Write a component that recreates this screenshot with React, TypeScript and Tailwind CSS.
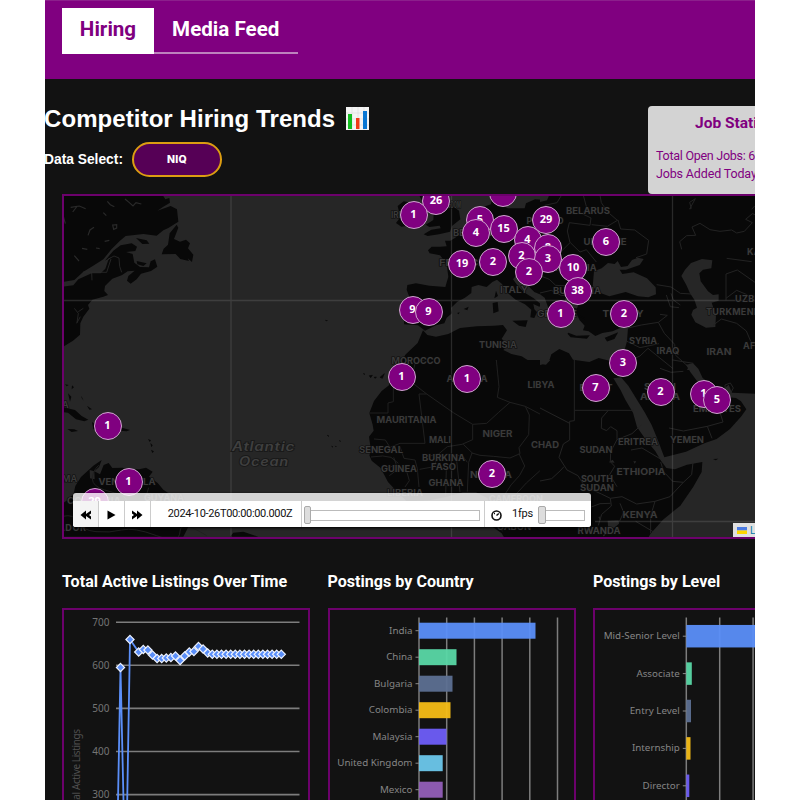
import React from "react";

const LABEL_FONT = "Inter, 'Noto Sans', sans-serif";

type Place = [text: string, x: number, y: number, width: number];

// Country names: centre x, baseline y, drawn width
const places: Place[] = [
  ["BELARUS", 588, 214, 44],
  ["IRELAND", 409, 218, 36],
  ["UNITED KINGDOM", 442, 208, 38],
  ["POLAND", 545, 224, 37],
  ["BELGIUM", 474, 236, 42],
  ["UKRAINE", 605, 245, 43],
  ["ROMANIA", 574, 271, 45],
  ["FRANCE", 462, 266, 46],
  ["ITALY", 514, 293, 28],
  ["BULGARIA", 577, 294, 48],
  ["GREECE", 557, 317, 40],
  ["TURKEY", 623, 317, 41],
  ["TUNISIA", 498, 348, 38],
  ["MOROCCO", 416, 364, 49],
  ["SYRIA", 643, 344, 28],
  ["IRAQ", 668, 354, 23],
  ["IRAN", 719, 355, 25],
  ["ALGERIA", 467, 382, 41],
  ["LIBYA", 541, 388, 27],
  ["EGYPT", 596, 391, 33],
  ["SAUDI", 660, 390, 32],
  ["ARABIA", 660, 400, 40],
  ["EMIRATES", 717, 412, 48],
  ["MAURITANIA", 406.500, 423, 60],
  ["MALI", 440, 443, 22],
  ["NIGER", 497.500, 437, 30],
  ["CHAD", 545, 448, 28],
  ["SUDAN", 596, 453, 33],
  ["ERITREA", 638, 445, 40],
  ["YEMEN", 687, 443, 34],
  ["SENEGAL", 381, 453, 44],
  ["GUINEA", 399, 472, 36],
  ["BURKINA", 443.500, 461, 43],
  ["FASO", 443.500, 470, 25],
  ["GHANA", 446, 486, 35],
  ["NIGERIA", 491, 478, 42],
  ["LIBERIA", 405, 496, 36],
  ["CAMEROON", 516, 502, 54],
  ["GABON", 514, 530, 34],
  ["ETHIOPIA", 641, 475, 49],
  ["SOUTH", 597, 482, 32],
  ["SUDAN", 597, 491, 34],
  ["KENYA", 640, 518, 35],
  ["RWANDA", 599, 534, 43],
  ["VENEZUELA", 127, 485, 57],
  ["GUYANA", 164, 501, 40],
  ["COLOMBIA", 94, 504, 54],
];

// Names that run past an edge of the map: start x
const edgePlaces: [string, number, number][] = [
  ["KAZ", 747, 255],
  ["UZBEK", 735, 302],
  ["TURKMENIS", 706, 315],
  ["AFG", 743, 349],
];

const markers: [string, number, number][] = [
  ["", 503, 192.500],
  ["26", 436, 200.500],
  ["1", 413.500, 215],
  ["5", 480, 220],
  ["4", 476, 233],
  ["15", 503.500, 229],
  ["29", 546, 220],
  ["4", 527.500, 240],
  ["8", 548, 247.500],
  ["2", 521.500, 255.500],
  ["3", 548, 259],
  ["2", 529, 272],
  ["6", 606, 242],
  ["19", 462, 263.500],
  ["2", 493, 261.500],
  ["10", 573, 267.500],
  ["38", 577.500, 291],
  ["1", 560.500, 314],
  ["2", 624, 314],
  ["9", 412.500, 310],
  ["9", 428.500, 311.500],
  ["1", 401.500, 377],
  ["1", 467, 378.500],
  ["3", 623, 363],
  ["7", 595.500, 388],
  ["2", 660.500, 391.500],
  ["1", 703.500, 393.500],
  ["5", 717, 400],
  ["1", 107.500, 426],
  ["1", 128.500, 482],
  ["29", 94.500, 502],
  ["2", 492, 474],
];

const LAND = "#080808";
const SEA = "#262626";

function WorldMap() {
  return (
    <svg className="block h-full w-full" viewBox="64 196 691 341" preserveAspectRatio="none">
      <defs>
        <clipPath id="nw"><rect width="780" height="540" /></clipPath>
        <clipPath id="sw"><rect width="780" height="570" /></clipPath>
      </defs>
      <rect x="63" y="195" width="692" height="344" fill={SEA} />

      {/* North America */}
      <g transform="translate(40 190) scale(.33333)" fill={LAND}>
        <path d="M69 15H368L376 28 388 24 390 38 370 50 352 62 392 48 411 58 415 95 398 106 385 114 370 121 350 137 310 132 257 138 240 152 215 177 190 208 162 226 130 245 103 270 69 276ZM69 290L100 286 115 268 155 250 182 250 196 236 205 210 215 200 195 212 220 182 242 166 275 160 291 170 286 183 258 186 278 192 283 218 300 231 327 232 332 214 345 208 352 230 333 243 303 251 290 268 272 281 261 272 265 258 284 242 263 244 245 256 217 266 195 288 193 303 204 315 190 320 157 329 144 345 148 356 130 380 121 400 120 434 99 452 69 471Z" />
        <path d="M410 104L415 113 402 147 420 155 438 149 450 160 444 175 460 194 456 216 443 205 447 213 421 207 407 192 365 193 371 176 384 164 389 130ZM288 144L320 151 328 161 307 162ZM290 213L320 220 310 228 292 223Z" />
        <g fill="none" stroke="#2a2a2a" strokeWidth="5">
          <path d="M92 52L118 48 137 56M112 48 98 66M202 34L211 44 223 50M255 27L268 38 279 48 288 38 304 42M144 136L150 120 162 112M218 105L230 104 230 114 221 118ZM126 175 142 178M168 174 179 176M190 68 199 77M194 154 208 151M103 197 117 213M69 75 76 101" strokeWidth="3.500" />
          <path d="M204 208L222 198 237 204 239 229 245 247M130 246 200 247 213 207M155 247 156 271M103 355L115 370 111 398M115 365 130 355M121 380 110 400" strokeWidth="2.500" />
        </g>
      </g>

      {/* Caribbean and the north of South America */}
      <g transform="translate(40 370) scale(.33333)" fill={LAND}>
        <path d="M69 112L105 120 125 138 145 149 133 154 108 148 84 128 69 126ZM82 177L103 178 114 183 95 186ZM210 167L235 170 270 180 260 184 218 181ZM156 156 180 174 160 178ZM84 70 94 80 90 95ZM75 43 86 45 80 49ZM96 46 102 52 95 58ZM124 77 131 92 125 84ZM141 107 156 118 148 119ZM324 207 333 211 329 216ZM331 219 338 226 334 232ZM333 239 342 244 337 249ZM356 257 361 259Z" />
        <path d="M69 393L100 375 106 348 123 321 160 287 185 270 177 291 163 304 180 313 191 285 206 279 217 294 248 293 278 302 318 293 338 305 327 320 353 339 370 359 410 386 455 400 475 412 430 500H69ZM580 488L610 485 655 500H570ZM287 296 297 299 290 307Z" />
        <path d="M149 300L163 304 164 328 150 325ZM69 355 84 362 94 382 69 400Z" fill={SEA} />
        <path d="M176 286Q156 305 157 327T194 360 241 373 265 400M69 439Q101 431 114 456T168 485 245 480 350 497 420 485 500 497M326 353L315 390 332 412M365 385 353 420" fill="none" stroke="#202020" strokeWidth="3" />
      </g>

      {/* Western Europe and the Maghreb */}
      <g transform="translate(290 190) scale(.33333)" fill={LAND} clipPath="url(#nw)">
        <path d="M387 15H475L480 42 507 62 511 88 486 108 480 125 447 133 413 138 401 133 424 119 452 115 449 107 418 111 407 104 430 90 431 74 414 60 401 41ZM323 48L341 34 384 42 389 82 378 104 334 110 318 99 331 82Z" />
        <path d="M790 15V545L772 520 755 529 722 516 695 499 664 492 640 480 654 465 635 446 651 421 639 405 612 407 561 409 510 414 475 432 438 440 412 435 399 421 383 459 346 494 332 521 303 548H790V337L760 317 733 306 712 285 700 263 678 257 669 268 684 289 704 308 730 324 755 344 748 350 730 342 733 358 741 366 733 384 721 382 724 359 705 343 677 329 651 307 636 282 621 269 607 276 590 291 565 285 545 291 544 309 525 323 502 335 483 354 486 370 470 383 463 400 438 406 405 422 384 406 342 403 342 386 358 362 360 326 350 299 352 285 378 280 418 287 466 291 475 260 470 221 450 196 419 190 414 181 425 170 450 170 470 169 465 152 481 152 496 143 516 124 541 94 566 76 577 52 603 43 608 15 626 15 628 41 653 55 704 55 708 40 735 28 779 31Z" />
        <path d="M667 392L713 391 707 411 687 407ZM608 339L623 336 626 364 610 370ZM618 302 624 318 613 325ZM501 369 509 367 506 373ZM521 357 536 350 532 361ZM543 350 548 351ZM65 378 70 380ZM83 372 88 375ZM105 389 115 392 108 394ZM232 482 239 484Z" />
      </g>

      {/* West and central Africa */}
      <g transform="translate(290 360) scale(.33333)" fill={LAND} clipPath="url(#sw)">
        <path d="M365 0H755L769 14 790 12V570H665L635 520 605 499 607 446 592 414 558 397 519 397 470 410 418 421 350 424 317 391 294 366 272 324 245 302 238 286 243 272 237 230 251 212 248 194 238 159 252 123 275 93 297 76 308 38Z" />
        <path d="M220 41 225 43ZM238 47 247 46 242 53ZM252 52 259 51 256 55ZM270 52 283 41 277 55ZM112 226 117 229ZM125 259 129 261ZM136 258 139 261ZM148 242 152 244Z" stroke={LAND} strokeWidth="2" />
        <g fill="none" stroke="#202020" strokeWidth="3" strokeLinejoin="round">
          <path d="M238 159H294V129L310 125V74M365 67L410 102H387L405 250H330L300 262 286 240 252 237M410 102L490 158 548 193V239L516 253 472 260 446 282 406 291M548 193L590 190 626 157 660 127 622 112 627 80 619 0M660 127L706 139 718 165 716 224 687 263 690 281 660 294 610 289 570 286 546 279 536 307 532 395M687 281 704 318 689 346 663 375 641 409 676 405 709 369 749 333 780 320M330 260L342 295 375 300 382 326 387 381M243 291 278 288 303 292 325 310M298 347 323 328 350 334 358 362 345 381M446 282 432 320 389 328M470 282 519 289 532 307M469 326 467 407M500 302 510 397M607 446 670 444 697 480 780 479M619 480 637 514M520 253 548 280M706 139 780 178M311 292 319 314 276 331" />
          <path d="M468 -25L467 -70 439 -92M468 -25 375 10 365 60M615 0 647 -23" />
        </g>
      </g>

      {/* Eastern Europe and the Middle East */}
      <g transform="translate(540 190) scale(.33333)">
        <rect x="0" y="15" width="655" height="530" fill={LAND} />
        <g fill={SEA}>
          <path d="M0 15H28L21 31 0 36ZM160 266L162 244 185 235 204 219 224 222 233 213 243 231 263 228 276 210 293 203 311 207 299 225 258 239 239 239 247 252 281 247 321 265 347 292 348 313 325 322 294 319 257 306 208 319 181 309 158 291ZM424 258L435 239 453 219 486 207 517 211 514 235 489 239 478 250 482 274 504 304 519 315 536 313 536 332 515 338 528 375 526 411 498 413 466 397 454 374 459 360 471 353 463 329 450 310 439 285Z" />
          <path d="M0 313L14 323 24 351 41 371 60 390 76 393 67 354 77 324 95 327 115 344 107 367 119 391 134 407 129 421 146 424 166 438 187 429 218 424 240 414 264 414 261 454 248 501 223 516 176 504 148 516 99 509 87 490 58 477 34 493 27 514 0 526Z" />
          <path d="M440 542L447 528 474 540 481 555H445Z" />
        </g>
        <path d="M84 430L108 439 145 438 140 444 93 440ZM197 444 230 431 222 445 202 452ZM97 355 114 358ZM120 379 134 386Z" fill={LAND} stroke={LAND} strokeWidth="4" />
        <g fill="none" stroke="#232323" strokeWidth="3" strokeLinejoin="round">
          <path d="M65 15L51 38 14 46M130 16L140 53 128 72 153 84 150 106 88 98 82 123 90 158 63 185 29 184M155 104 202 109 234 90 242 117 284 120 326 151 320 192 288 203M180 15 184 38 202 65 231 90M91 158 120 186 139 179 169 216M0 257 28 268 47 286 145 291M0 309 34 301 65 317 119 309M350 284 393 291 421 310 454 312M379 315 391 350 417 353M264 414 304 405 355 397 382 376 360 373M355 397 373 430 404 463 407 496 446 531M261 454 300 473 357 461M262 515 300 498 324 475 398 535M250 510 235 545M393 310 400 330 421 345M425 178 419 155 440 137 467 136 456 111 480 100 510 119 540 124 575 120 590 129 613 124 637 98 617 88 637 71 645 74M558 331V252L592 240 645 277M558 325 590 301 621 314 640 337M519 406 544 387 590 400 619 423 633 456 645 462M449 57 466 26 449 37 454 55ZM635 58 644 48M560 205 635 215" />
        </g>
      </g>

      {/* East Africa and the Arabian peninsula */}
      <g transform="translate(540 360) scale(.33333)">
        <rect x="0" y="30" width="655" height="540" fill={LAND} />
        <g fill={SEA}>
          <path d="M0 0H31L18 14 0 12ZM438 14L459 10 475 26 488 54 512 72 527 91 551 87 566 74 576 98 655 102V570H305L331 522 369 479 421 437 460 380 485 336 487 306 441 314 405 328 379 324 363 302 346 274 316 237 291 201 279 158 256 119 242 91 220 55 243 52 265 77 289 116 314 157 335 195 349 229 373 292 438 275 493 250 530 237 570 207 588 187 603 170 619 148 603 124 588 114 551 110 527 107 490 95 471 63 451 36Z" />
          <path d="M203 482L236 481 237 491 219 506 204 500ZM206 307 218 299 224 308ZM280 304 289 304 284 311ZM291 390 299 386Z" />
          <path d="M210 505L190 528M177 470 181 480" stroke={SEA} strokeWidth="4" />
        </g>
        <path d="M519 297 535 296 527 301Z" fill={LAND} />
        <g fill="none" stroke="#242424" strokeWidth="3" strokeLinejoin="round">
          <path d="M103 0V182L89 184V240L70 252 57 292 81 330 114 347 134 379 184 402 211 415 246 410 290 432 345 424 390 410 430 367 398 364 371 335 362 306M0 144 89 190M104 151H282M205 151 185 174 184 205 200 212 212 200 231 212 231 239 212 275 211 305 224 319 209 344 231 380M231 239 276 221 304 195M273 270 306 264 365 299M387 204 430 213 502 199 549 186 538 151 552 120M502 199 516 235M398 0 460 10M360 25 393 37 430 34M430 367 455 344 459 307M0 363 35 356 60 333 72 320M211 415 214 438 185 463 175 496M240 430 251 457 239 483M287 484 341 516M345 424 332 468 332 520M130 450 180 431 211 430M130 451 119 479 119 510" />
          <path d="M555 75 571 69 580 84 572 99 556 94Z" />
        </g>
      </g>

      <path d="M231 195V539M451.500 195V539M672.500 195V539M63 300.500H755M595 521.500H755" fill="none" stroke="#787878" strokeOpacity=".3" strokeWidth="1.300" />
      <g fontFamily={LABEL_FONT} fontSize="9" fontWeight="700" fill="#3a3a3a" stroke="#0b0b0b" strokeWidth="1.200" paintOrder="stroke">
        {places.map(([t, x, y, w], i) => (
          <text key={i} x={x - w / 2} y={y} textLength={w} lengthAdjust="spacingAndGlyphs">{t}</text>
        ))}
        {edgePlaces.map(([t, x, y]) => (
          <text key={t} x={x} y={y} letterSpacing=".3">{t}</text>
        ))}
        <text x="62" y="408">A</text>
        <text x="62" y="482">MA</text>
        <text x="58" y="531" textLength="28">ADOR</text>
      </g>
      <g fontFamily={LABEL_FONT} fontSize="12.500" fontWeight="600" fontStyle="italic" fill="#3f3f3f" stroke="#191919" strokeWidth="1.800" paintOrder="stroke">
        <text x="232" y="451" textLength="63" lengthAdjust="spacingAndGlyphs" letterSpacing=".6">Atlantic</text>
        <text x="239" y="466" textLength="50" lengthAdjust="spacingAndGlyphs" letterSpacing=".6">Ocean</text>
      </g>
    </svg>
  );
}

function Skip({ back = false }: { back?: boolean }) {
  return (
    <svg className={back ? "h-[10px] w-[11px] -scale-x-100" : "h-[10px] w-[11px]"} viewBox="0 0 11 10">
      <path d="M0 .5 5 4V.5L10.500 5 5 9.500V6L0 9.500V6.500L2 5 0 3.500Z" />
    </svg>
  );
}

function TimeControl() {
  return (
    <div className="absolute left-[9px] top-[297px] h-[34px] w-[518px] rounded-[3px] bg-white/80 pt-[8px] shadow-[0_1px_3px_#000]">
      <div className="flex h-[26px] rounded-b-[3px] bg-white font-[Roboto] text-[11px] text-[#111]">
        <div className="flex w-[26px] items-center justify-center rounded-bl-[3px] border-r border-[#ccc] bg-[#f4f4f4] pt-[2px]"><Skip back /></div>
        <div className="flex w-[26px] items-center justify-center border-r border-[#ccc] pt-[2px]">
          <svg className="h-[10px] w-[9px]" viewBox="0 0 9 10"><path d="M.5.500 8.500 5 .500 9.500Z" /></svg>
        </div>
        <div className="flex w-[26px] items-center justify-center border-r border-[#ccc] pt-[2px]"><Skip /></div>
        <div className="flex w-[151px] items-center justify-center whitespace-nowrap border-r border-[#ccc] pl-[8px] pt-px text-[11px] tracking-[-0.33px]">2024-10-26T00:00:00.000Z</div>
        <div className="flex w-[183px] items-center border-r border-[#ccc] pl-[2px] pt-[2px]">
          <div className="h-[18px] w-[7px] shrink-0 rounded-[2px] border border-[#aaa] bg-[#ddd]" />
          <div className="h-[11px] w-[169px] border border-l-0 border-[#bbb]" />
        </div>
        <div className="flex items-center pl-[6px]">
          <svg className="mt-[3px] h-[11px] w-[11px]" viewBox="0 0 11 11" fill="none" stroke="#111">
            <circle cx="5.500" cy="5.500" r="4.500" strokeWidth="1.600" />
            <path d="M5.500 5.500 7.800 3.500M3 3.500H4" strokeWidth="1.500" />
          </svg>
          <span className="ml-[10px] w-[26px] pt-px tracking-[-0.2px]">1fps</span>
          <div className="mt-[2px] h-[18px] w-[8px] rounded-[2px] border border-[#aaa] bg-[#ddd]" />
          <div className="mt-[2px] h-[11px] w-[39px] border border-l-0 border-[#bbb]" />
        </div>
      </div>
    </div>
  );
}

const series = [652, 649.5, 650, 655, 658.5, 658.5, 658, 657.5, 656, 660.5, 656, 652, 651.5, 646.5, 649, 653, 654.3, 654.3, 654.3, 654.3, 654.3, 654.3, 654.3, 654.3, 654.3, 654.3, 654.3, 654.3, 654.3, 654.3, 654.3, 654.3];
const points: [number, number][] = [
  [120.5, 667.5],
  [130, 639.5],
  ...series.map((y, i): [number, number] => [138.7 + i * 4.6, y]),
];

function LineChart() {
  const trend = points.slice(1).map((p) => p.join(",")).join(" ");
  return (
    <svg className="block h-[190px] w-[244px]" viewBox="64 610 244 190" fontFamily="'Noto Sans', 'Open Sans', sans-serif" fontSize="10">
      {[700, 600, 500, 400, 300].map((v, i) => (
        <g key={v}>
          <path d={`M116 ${622.2 + i * 43.1}H299.500`} stroke="#7d7d7d" strokeWidth="1.600" />
          <text x="109.500" y={625.5 + i * 43.1} textAnchor="end" fill="#747474">{v}</text>
        </g>
      ))}
      <text transform="translate(80 813) rotate(-90)" fill="#505050" textLength="84">Total Active Listings</text>
      <g fill="none" stroke="#5b8ff9" strokeWidth="1.800">
        <path d="M118 801 120.500 667.500 123.500 801M127.200 801 130 639.500" />
        <polyline points={trend} />
      </g>
      {points.map(([x, y], i) => (
        <path key={i} d={`M${x} ${y - 4.1}l4.100 4.100-4.100 4.100-4.100-4.100Z`} fill="#5b8ff9" stroke="#eef3ff" strokeWidth="1.200" />
      ))}
    </svg>
  );
}

type Bar = [label: string, width: number, color: string];

const countries: Bar[] = [
  ["India", 116.5, "#5b8ff9"],
  ["China", 37.5, "#5ad8a6"],
  ["Bulgaria", 33.5, "#5d7092"],
  ["Colombia", 31.5, "#f6bd16"],
  ["Malaysia", 27.5, "#6f5ef9"],
  ["United Kingdom", 23.7, "#6dc8ec"],
  ["Mexico", 23.7, "#945fb9"],
];
const levels: Bar[] = [
  ["Mid-Senior Level", 80, "#5b8ff9"],
  ["Associate", 5.5, "#5ad8a6"],
  ["Entry Level", 4.7, "#5d7092"],
  ["Internship", 4.2, "#f6bd16"],
  ["Director", 3, "#6f5ef9"],
];

interface BarChartProps {
  bars: Bar[];
  axis: number;
  tick: number;
  first: number;
  step: number;
  thick: number;
  count: number;
}

function BarChart({ bars, axis, tick, first, step, thick, count }: BarChartProps) {
  return (
    <svg className="block h-[190px] w-[244px]" viewBox="1.500 1 244 190" fontFamily="'Noto Sans', 'Open Sans', sans-serif" fontSize="9.800">
      {Array.from({ length: count }, (_, i) => (
        <path key={i} d={`M${axis + i * tick} 8.500V191`} stroke="#7d7d7d" strokeWidth="1.500" />
      ))}
      {bars.map(([label, w, color], i) => {
        const y = first + i * step;
        return (
          <g key={label}>
            <rect x={axis} y={y - thick / 2} width={w} height={thick} fill={color} fillOpacity=".95" />
            <path d={`M${axis - 3.5} ${y}h3.500`} stroke="#8a8a8a" />
            <text x={axis - 6.5} y={y + 3} textAnchor="end" fill="#858585">{label}</text>
          </g>
        );
      })}
    </svg>
  );
}

function Panel({ title, children }: { title: string; children: React.ReactNode }) {
  return (
    <section>
      <h2 className="h-[38px] whitespace-nowrap pt-px font-[Roboto] text-[16.100px] font-bold leading-[22px] text-white">{title}</h2>
      <div className="h-[300px] border-2 border-[#6c016c]">{children}</div>
    </section>
  );
}

export default function App() {
  return (
    <div className="h-[800px] w-[800px] overflow-hidden bg-white pl-[45px]">
      <div className="h-[800px] w-[710px] overflow-hidden bg-[#121212] font-['Liberation_Sans',Arial,sans-serif]">
        <header className="h-[79px] border-t border-[#8c1f8c] bg-[#800080] pl-[17px] pt-[6.500px]">
          <nav className="flex h-[46px] w-[235.500px] border-b-2 border-[#bd82bd] font-[Roboto] text-[20.600px] font-bold">
            <div className="flex h-[46px] w-[92px] items-center justify-center bg-white pb-[2px] text-[#800080]">Hiring</div>
            <div className="flex h-[44px] flex-1 items-center justify-center whitespace-nowrap text-white">Media Feed</div>
          </nav>
        </header>

        <div className="flex h-[115px] items-start justify-between">
          <div className="pt-[24px] text-white">
            <h1 className="-ml-px flex h-[31px] items-center gap-[12px] whitespace-nowrap text-[24px] font-bold">
              <span className="w-[290px] tracking-[0.080px]">Competitor Hiring Trends</span>
              <svg className="h-[23px] w-[23px]" viewBox="0 0 23 23">
                <path d="M0 0H23V23H0Z" fill="#f4f4f4" />
                <path d="M0 6H23M0 12H23M0 18H23M6 0V23M12 0V23M18 0V23" stroke="#ddd" strokeWidth=".7" />
                <path d="M2 7h4v15H2Z" fill="#13bd20" />
                <path d="M10 11h3.500v11H10Z" fill="#f23a17" />
                <path d="M17 4h4v18h-4Z" fill="#0876d3" />
              </svg>
            </h1>
            <div className="-ml-px flex items-center pt-[8px] text-[13.800px] font-bold">
              <span className="w-[88px] whitespace-nowrap pt-px">Data Select:</span>
              <button className="h-[35px] w-[90px] rounded-full border-2 border-[#dc9d12] bg-[#560056] font-['Inter'] text-[10.500px] font-extrabold tracking-[0.300px] text-white">NIQ</button>
            </div>
          </div>
          <aside className="mt-[26.500px] h-[88.500px] w-[107px] overflow-hidden whitespace-nowrap rounded-l-[4px] bg-[#d3d3d3] pl-[8px] font-[Roboto] text-[#800080]">
            <h3 className="pl-[39px] pt-[7px] text-[15.500px] font-bold leading-[20px]">Job Stati</h3>
            <p className="mt-[14px] text-[12.500px] leading-[18.500px] tracking-[-0.270px]">Total Open Jobs: 6</p>
            <p className="text-[12.500px] leading-[18.500px] tracking-[-0.150px]">Jobs Added Today</p>
          </aside>
        </div>

        <main className="ml-[17px]">
          <div className="relative h-[345px] overflow-hidden border-2 border-r-0 border-[#6c016c]">
            <WorldMap />
            {markers.map(([n, x, y], i) => (
              <div
                key={i}
                className="absolute flex h-[28px] w-[28px] -translate-x-1/2 -translate-y-1/2 items-center justify-center rounded-full border border-[#cfa6cf] bg-[#800080] pb-px font-['Open_Sans'] text-[11px] font-bold text-white"
                style={{ left: x - 64, top: y - 196 }}
              >
                {n}
              </div>
            ))}
            <TimeControl />
            <div className="absolute bottom-0 right-0 flex h-[14px] w-[22px] items-center overflow-hidden bg-[#e0e0e0] pl-[4px] font-[Inter] text-[10px] text-[#0078a8]">
              <svg className="mr-[3px] h-[7px] w-[10px] shrink-0" viewBox="0 0 10 7">
                <path d="M0 0H10V3.500H0Z" fill="#4c7be1" />
                <path d="M0 3.500H10V7H0Z" fill="#ffd500" />
              </svg>
              L
            </div>
          </div>

          <div className="grid grid-cols-[248px_248px_248px] gap-x-[17.500px] pt-[31px]">
            <Panel title="Total Active Listings Over Time"><LineChart /></Panel>
            <Panel title="Postings by Country">
              <BarChart bars={countries} axis={90.5} tick={27.7} first={21.700} step={26.5} thick={16} count={6} />
            </Panel>
            <Panel title="Postings by Level">
              <BarChart bars={levels} axis={92.8} tick={33.4} first={27.200} step={37.4} thick={22.500} count={3} />
            </Panel>
          </div>
        </main>
      </div>
    </div>
  );
}
